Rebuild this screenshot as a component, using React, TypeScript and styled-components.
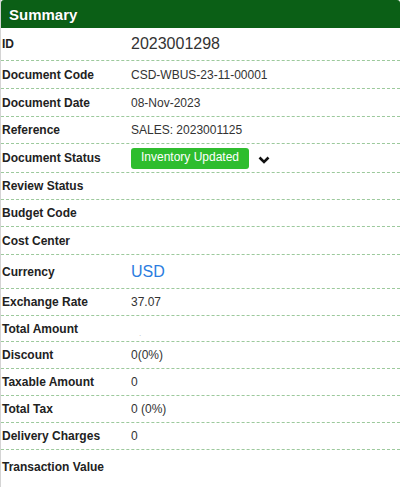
import * as React from 'react';
import styled, { createGlobalStyle } from 'styled-components';

const Global = createGlobalStyle`
  body { margin: 0; background: #fff; font-family: "Liberation Sans", Arial, sans-serif; }
`;

const Panel = styled.div`
  width: 400px;
  height: 487px;
  border-left: 1px solid #d4d4d4;
  box-sizing: border-box;
  overflow: hidden;
`;

const Header = styled.div`
  height: 28px;
  background: #0b5f16;
  border-radius: 3px 3px 0 0;
  color: #fff;
  font-weight: bold;
  font-size: 15px;
  padding-left: 8px;
  display: flex;
  align-items: center;
  text-shadow: 0 0 1px rgba(0, 0, 0, 0.4);
`;

const Row = styled.div<{ $h: number; $last?: boolean }>`
  height: ${(p) => p.$h}px;
  display: flex;
  align-items: center;
  border-bottom: ${(p) => (p.$last ? 'none' : '1px dashed #9cc99c')};
  box-sizing: border-box;
`;

const Label = styled.div`
  width: 129px;
  padding-left: 1px;
  font-weight: bold;
  font-size: 12px;
  color: #222;
`;

const Value = styled.div<{ $big?: boolean; $blue?: boolean }>`
  font-size: ${(p) => (p.$big ? '16px' : '12px')};
  color: ${(p) => (p.$blue ? '#2b7de0' : '#333')};
  display: flex;
  align-items: center;
`;

const Badge = styled.span`
  background: #2ebd2e;
  color: #fff;
  font-size: 12px;
  width: 118px;
  height: 21px;
  border-radius: 3px;
  display: inline-flex;
  align-items: center;
  justify-content: center;
  padding-bottom: 2px;
  box-sizing: border-box;
`;

const Chevron = () => (
  <svg width="12" height="10" viewBox="0 0 12 10" style={{ marginLeft: 9, marginTop: 4 }}>
    <path d="M1.5 2.5 L6 7 L10.5 2.5" stroke="#111" strokeWidth="2.6" fill="none" />
  </svg>
);

type Item = { label: string; value?: React.ReactNode; h: number; big?: boolean; blue?: boolean };

const rows: Item[] = [
  { label: 'ID', value: '2023001298', h: 33, big: true },
  { label: 'Document Code', value: 'CSD-WBUS-23-11-00001', h: 28 },
  { label: 'Document Date', value: '08-Nov-2023', h: 28 },
  { label: 'Reference', value: 'SALES: 2023001125', h: 27 },
  { label: 'Document Status', value: <><Badge>Inventory Updated</Badge><Chevron /></>, h: 29 },
  { label: 'Review Status', h: 27 },
  { label: 'Budget Code', h: 27 },
  { label: 'Cost Center', h: 28 },
  { label: 'Currency', value: 'USD', h: 34, big: true, blue: true },
  { label: 'Exchange Rate', value: '37.07', h: 27 },
  { label: 'Total Amount', value: <span style={{ color: '#bbb', fontSize: 8, marginTop: 10, marginLeft: 8 }}>.</span>, h: 26 },
  { label: 'Discount', value: '0(0%)', h: 27 },
  { label: 'Taxable Amount', value: '0', h: 27 },
  { label: 'Total Tax', value: '0 (0%)', h: 27 },
  { label: 'Delivery Charges', value: '0', h: 27 },
  { label: 'Transaction Value', h: 34 },
];

export default function App() {
  return (
    <>
      <Global />
      <Panel>
        <Header>Summary</Header>
        {rows.map((r, i) => (
          <Row key={r.label} $h={r.h} $last={i === rows.length - 1}>
            <Label>{r.label}</Label>
            <Value $big={r.big} $blue={r.blue}>{r.value}</Value>
          </Row>
        ))}
      </Panel>
    </>
  );
}
